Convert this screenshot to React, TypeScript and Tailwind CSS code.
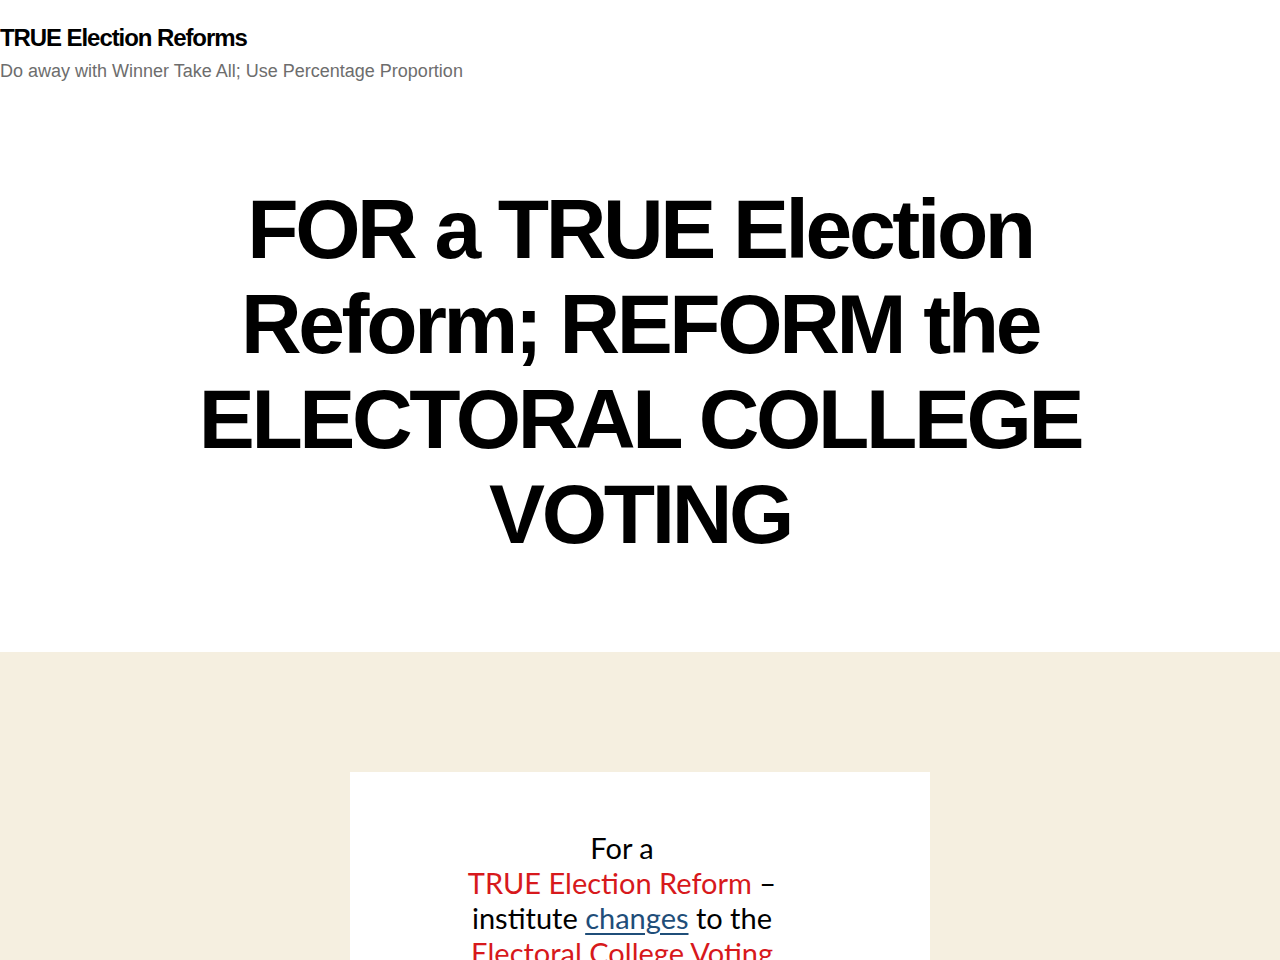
export default function App() {
  return (
    <div className="min-h-screen bg-white" style={{ fontFamily: '"Liberation Sans", Arial, sans-serif' }}>
      {/* header */}
      <header className="pt-[23px] pb-[100px]">
        <h1 className="text-[24px] leading-[29px] font-bold tracking-[-0.045em] text-black">TRUE Election Reforms</h1>
        <p className="mt-[9px] text-[18px] leading-[1.15] text-[#6d6d6d]">
          Do away with Winner Take All; Use Percentage Proportion
        </p>
      </header>

      {/* page title */}
      <div className="flex justify-center pb-[90px]">
        <h2 className="max-w-[960px] text-center text-[84px] leading-[95px] font-bold tracking-[-0.04em] text-black">
          FOR a TRUE Election Reform; REFORM the ELECTORAL COLLEGE VOTING
        </h2>
      </div>

      {/* featured image */}
      <section className="bg-[#f5efe0] pt-[120px] pb-[120px]">
        <div className="mx-auto w-[580px] bg-white pt-[58px] pb-[80px]">
          <div
            className="pr-[36px] text-center text-[29px] leading-[35px] text-black"
            style={{ fontFamily: 'Lato, "Open Sans", sans-serif' }}
          >
            <p>For a</p>
            <p>
              <span className="text-[#d7191c]">TRUE Election Reform</span> –
            </p>
            <p>
              institute <span className="text-[#1f4e79] underline underline-offset-4">changes</span> to the
            </p>
            <p className="text-[#d7191c]">Electoral College Voting</p>
          </div>
        </div>
      </section>
    </div>
  );
}
